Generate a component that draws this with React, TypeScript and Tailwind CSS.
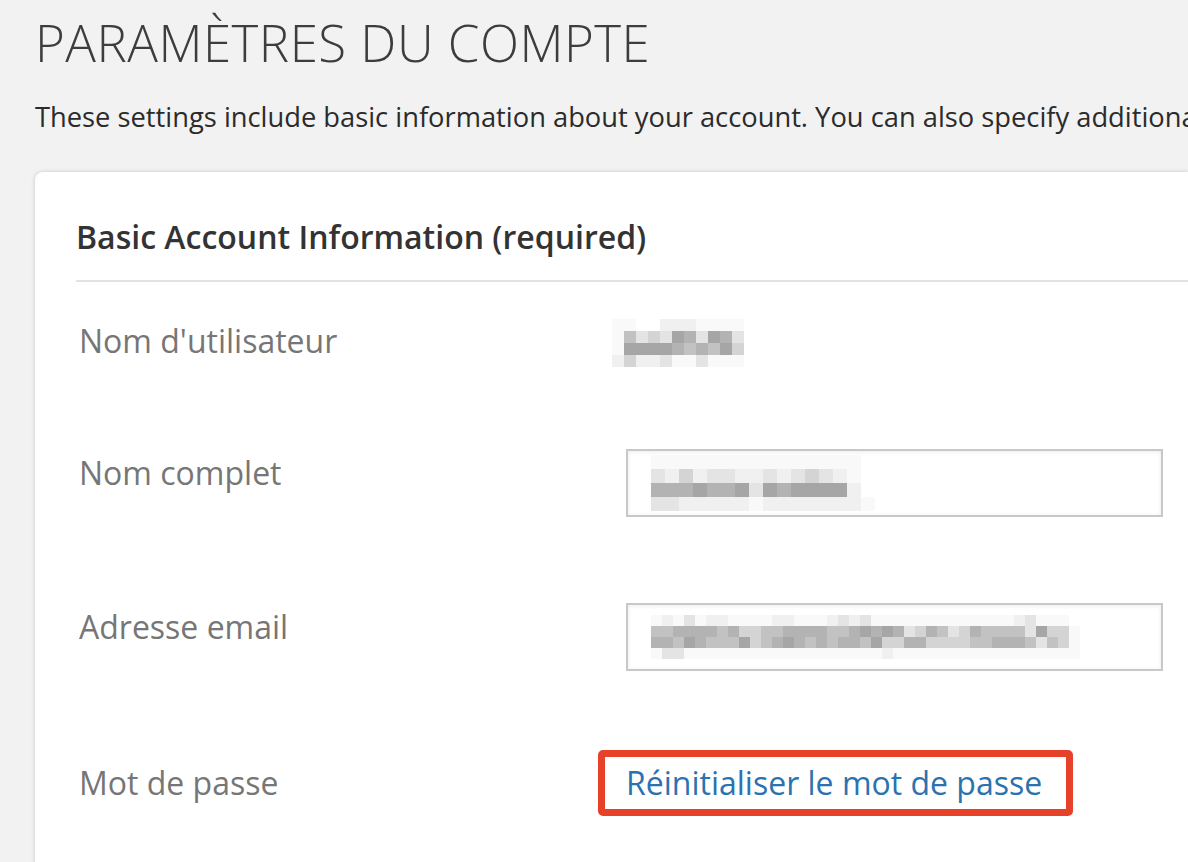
import React from "react";

// shade key -> full class name so tailwind picks it up
const SHADE: Record<string, string> = {
  a: "bg-[#a6a6a6]",
  b: "bg-[#b3b3b3]",
  c: "bg-[#c2c2c2]",
  d: "bg-[#d4d4d4]",
  e: "bg-[#e4e4e4]",
  f: "bg-[#f0f0f0]",
  w: "bg-[#f9f9f9]",
  ".": "bg-transparent",
};

function Pixels({ rows, cell }: { rows: string[]; cell: string }) {
  return (
    <div className="flex flex-col">
      {rows.map((row, i) => (
        <div key={i} className="flex">
          {row.split("").map((k, j) => (
            <div key={j} className={`${cell} ${SHADE[k]}`} />
          ))}
        </div>
      ))}
    </div>
  );
}

const usernameBlur = ["ww..fffwwww", "wcedeabeabe", "waaaabcbcad", "fdffewwewww"];

const fullNameBlur = [
  "wwwwwwwwwwwwwww",
  "efdfeeffefedefw",
  "bbbabbaeabaaaaf",
  "eefffffwfffffffw",
];

const emailBlur = [
  "wfwewffwwwwffwwwfefewwwwwwwwwwwwwfewww",
  "ccbbbbcbddccbbbbccbababedbcedbcccceaddw",
  "bbcabcccadcbabcbcbbcaddbbddddccbbbcecdw",
  "weewwwwwwwwwwwwwwwwwwfwwwwwwwwwwwwwwwww",
];

function TextInput({ children }: { children: React.ReactNode }) {
  return (
    <div className="w-[537px] h-[68px] border-2 border-[#c8c8c8] bg-white shadow-[inset_0_1px_4px_rgba(0,0,0,0.08)] flex items-center pl-[23px]">
      {children}
    </div>
  );
}

const label = "w-[547px] text-[32px] leading-[44px] text-[#767676] whitespace-nowrap";

export default function App() {
  const font = { fontFamily: '"Open Sans", "Noto Sans", sans-serif' };

  return (
    <div
      className="w-[1188px] h-[862px] overflow-hidden bg-[#f2f2f2]"
      style={font}
    >
      <div className="pl-[35px] pt-[10px]">
        <h1 className="text-[51px] leading-[64px] font-light text-[#3d3d3d] tracking-[0.5px] whitespace-nowrap">
          PARAMÈTRES DU COMPTE
        </h1>
        <p className="mt-[25px] text-[27.3px] leading-[36px] text-[#2b2b2b] whitespace-nowrap">
          These settings include basic information about your account. You can also specify additional
        </p>

        <div className="mt-[37px] bg-white rounded-tl-[8px] shadow-[0_0_4px_rgba(0,0,0,0.18)] pl-[41px] h-[720px]">
          <div className="pt-[43px] pb-[21px] border-b-2 border-[#e2e2e2]">
            <h2 className="text-[32px] leading-[44px] font-semibold text-[#333] whitespace-nowrap">
              Basic Account Information (required)
            </h2>
          </div>

          <div className="flex flex-col pl-[3px]">
            <div className="mt-[37px] flex items-center h-[44px]">
              <div className={label}>Nom d'utilisateur</div>
              <div className="-ml-[14px] mt-[3px]">
                <Pixels rows={usernameBlur} cell="w-[12px] h-[12px]" />
              </div>
            </div>

            <div className="mt-[86px] flex items-start">
              <div className={`${label} mt-[2px]`}>Nom complet</div>
              <TextInput>
                <Pixels rows={fullNameBlur} cell="w-[14px] h-[14px]" />
              </TextInput>
            </div>

            <div className="mt-[86px] flex items-start">
              <div className={`${label} mt-[2px]`}>Adresse email</div>
              <TextInput>
                <Pixels rows={emailBlur} cell="w-[11px] h-[11px]" />
              </TextInput>
            </div>

            <div className="mt-[90px] flex items-center h-[44px]">
              <div className={label}>Mot de passe</div>
              <div className="relative">
                <a href="#" className="text-[32px] leading-[44px] text-[#2b72b0] whitespace-nowrap">
                  Réinitialiser le mot de passe
                </a>
                <span className="absolute -left-[28px] -right-[31px] -top-[11px] -bottom-[11px] border-[7px] border-[#e8412a] rounded-[5px] pointer-events-none" />
              </div>
            </div>
          </div>
        </div>
      </div>
    </div>
  );
}
